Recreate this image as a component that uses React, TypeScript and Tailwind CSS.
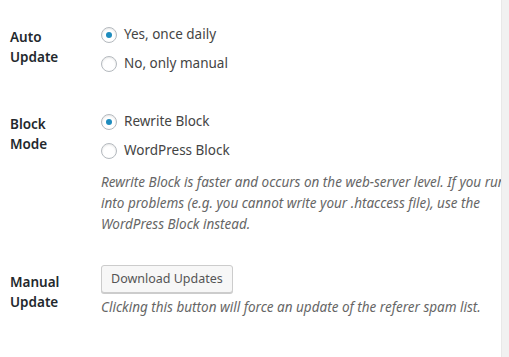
import { FC, ReactNode } from "react";

const font = { fontFamily: '"Segoe UI", "Noto Sans", "Open Sans", sans-serif' };

type RadioProps = {
  label: string;
  checked?: boolean;
};

const Radio: FC<RadioProps> = ({ label, checked }) => (
  <label className="flex h-[29px] items-center whitespace-nowrap">
    <span className="flex h-4 w-4 shrink-0 items-center justify-center rounded-full border border-[#b4b9be] bg-white shadow-[inset_0_1px_2px_rgba(0,0,0,0.1)]">
      {checked && <span className="h-[6px] w-[6px] rounded-full bg-[#1e8cbe]" />}
    </span>
    <span className="ml-[7px] text-[13.5px] text-[#444]">{label}</span>
  </label>
);

type RowProps = {
  label: [string, string];
  children: ReactNode;
  className?: string;
};

const Row: FC<RowProps> = ({ label, children, className }) => (
  <div className={"grid grid-cols-[101px_1fr] " + (className ?? "")}>
    <div className="pl-[10px] pt-[7px] text-[13.5px] font-semibold leading-[20px] text-[#23282d]">
      {label[0]}
      <br />
      {label[1]}
    </div>
    <div className="min-w-0">{children}</div>
  </div>
);

const Description: FC<{ children: ReactNode; className?: string }> = ({ children, className }) => (
  <p className={"whitespace-nowrap text-[13.5px] italic leading-[21px] text-[#666] " + (className ?? "")}>
    {children}
  </p>
);

const App: FC = () => {
  return (
    <div className="flex h-[357px] w-[509px] overflow-hidden bg-white" style={font}>
      <main className="min-w-0 flex-1 overflow-hidden pt-[20px]">
        <Row label={["Auto", "Update"]}>
          <Radio label="Yes, once daily" checked />
          <Radio label="No, only manual" />
        </Row>

        <Row label={["Block", "Mode"]} className="mt-[29px]">
          <Radio label="Rewrite Block" checked />
          <Radio label="WordPress Block" />
          <Description className="mt-[7px]">
            Rewrite Block is faster and occurs on the web-server level. If you run
            <br />
            into problems (e.g. you cannot write your .htaccess file), use the
            <br />
            WordPress Block instead.
          </Description>
        </Row>

        <Row label={["Manual", "Update"]} className="mt-[30px]">
          <button
            type="button"
            className="h-[28px] rounded-[3px] border border-[#ccc] bg-[#f7f7f7] px-[9px] text-[12.5px] text-[#555] shadow-[0_1px_0_#ccc]"
          >
            Download Updates
          </button>
          <Description className="mt-[4px]">
            Clicking this button will force an update of the referer spam list.
          </Description>
        </Row>
      </main>
      <aside className="w-[8px] shrink-0 border-l border-[#e8e8e8] bg-[#f1f1f1]" />
    </div>
  );
};

export default App;
